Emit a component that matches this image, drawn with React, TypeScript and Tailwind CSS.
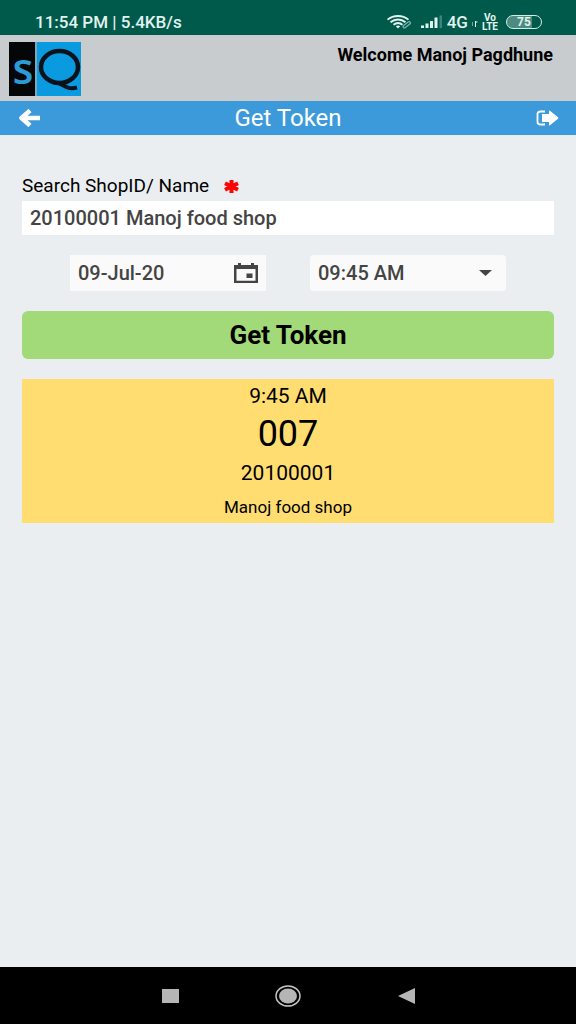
import type { ReactNode } from 'react';

function StatusBar() {
  return (
    <div className="flex items-center justify-between h-[35px] pt-2 pl-[35px] pr-[34px] text-[#e2f3ef] bg-[#005a4c]">
      <span className="text-[17px] font-medium leading-6">11:54 PM | 5.4KB/s</span>
      <div className="flex items-center">
        <svg className="w-[26px] h-[14px]" viewBox="0 0 25 14" fill="none" stroke="currentColor">
          <path d="M1 4.600C7 -0.200 16 -0.200 22 4.600" strokeWidth="1.800" />
          <path d="M4 7.200C8.500 3.600 14.500 3.600 19 7.200" strokeWidth="1.800" />
          <path d="M7 9.700C10 7.400 13 7.400 16 9.700" strokeWidth="1.800" />
          <path d="M9.300 11.200Q11.500 9.800 13.700 11.200L11.500 13.500Z" fill="currentColor" stroke="none" />
          <path d="M18 11.500L22.500 8" stroke="#7db5aa" strokeWidth="4" strokeLinecap="round" />
          <path d="M18 11.500L22.500 8" stroke="#005a4c" strokeWidth="1.500" strokeLinecap="round" />
        </svg>
        <svg className="w-[22px] h-[13px] ml-[9px]" viewBox="0 0 22 13" fill="currentColor">
          <path d="M0 10.500h3V13H0zM4.500 8.500h3V13h-3zM9 6h3v7H9zM13.500 2.500h3V13h-3z" />
          <path d="M18.500 0.500h2.500V13h-2.500z" fill="#3e8579" />
        </svg>
        <span className="ml-1 text-[17px] font-medium leading-6">4G</span>
        <svg className="w-[7px] h-[6px] mt-1 ml-[3px]" viewBox="0 0 7 6" stroke="currentColor">
          <path d="M1.500 1v4" opacity="0.5" />
          <path d="M4.500 0v6M4.500 1h2" />
        </svg>
        <span className="flex flex-col items-center ml-1 text-[10px] font-bold leading-[9px]">
          <span>Vo</span>
          <span>LTE</span>
        </span>
        <span className="flex items-center justify-center w-9 h-[14px] ml-2 text-[12px] font-bold leading-none border rounded-full border-[#d5ece7] bg-linear-to-r from-[#4d8a7f] from-75% to-[#005a4c] to-75%">
          75
        </span>
      </div>
    </div>
  );
}

function Logo() {
  return (
    <svg
      className="w-[72px] h-[54px] overflow-visible font-['Open_Sans',sans-serif]"
      viewBox="0 0 72 54"
      textAnchor="middle"
    >
      <path d="M0 0h26v54H0z" fill="#050608" />
      <path d="M26 0h2v54h-2z" fill="#7ba6bb" />
      <path d="M28 0h44v54H28z" fill="#0a9ae0" />
      <text className="font-semibold" x="14" y="42" fontSize="43" fill="#2b9bd8">
        s
      </text>
      <ellipse cx="50.500" cy="25" rx="18.500" ry="16" fill="none" stroke="#07131c" strokeWidth="4.500" />
      <path
        d="M45 41C53 39 56 49 68 45.500"
        fill="none"
        stroke="#07131c"
        strokeWidth="4"
      />
    </svg>
  );
}

function TitleBar() {
  return (
    <div className="flex items-center justify-between h-[34px] pl-[18px] pr-[17px] text-white bg-[#3c99da]">
      <button aria-label="Back" type="button">
        <svg
          className="w-[22px] h-[18px]"
          viewBox="0 0 22 18"
          fill="none"
          stroke="currentColor"
          strokeWidth="4.500"
          strokeLinejoin="round"
        >
          <path d="M12 1.500L3.500 9L12 16.500M4 9H22" />
        </svg>
      </button>
      <h1 className="text-2xl leading-8">Get Token</h1>
      <button aria-label="Log out" type="button">
        <svg className="w-[23px] h-[16px]" viewBox="0 0 23 16" fill="currentColor">
          <path d="M9 1.500H4.500Q1.500 1.500 1.500 4v8Q1.500 14.500 4.500 14.500H9" fill="none" stroke="currentColor" strokeWidth="1.800" />
          <path d="M6.500 4H13V1Q13 0 14 .7L22 7.300Q22.800 8 22 8.700L14 15.300Q13 16 13 15V12H6.500Q6 12 6 11.500V4.500Q6 4 6.500 4z" />
        </svg>
      </button>
    </div>
  );
}

function NavButton({ label, children }: { label: string; children: ReactNode }) {
  return (
    <button aria-label={label} className="flex items-center justify-center w-7 h-7" type="button">
      {children}
    </button>
  );
}

export default function App() {
  return (
    <div className="flex flex-col min-h-screen font-['Roboto',sans-serif] text-black bg-[#ebeef1]">
      <StatusBar />
      <header className="flex items-start justify-between h-[66px] pt-[7px] pl-[9px] pr-[23px] bg-[#c9cccf]">
        <Logo />
        <p className="text-lg font-bold leading-[26px]">Welcome Manoj Pagdhune</p>
      </header>
      <TitleBar />

      <main className="flex-1 px-[22px] pt-10">
        <label className="flex items-center h-[22px] mb-1 text-[19px]" htmlFor="shop">
          Search ShopID/ Name
          <svg
            className="w-[15px] h-[13px] ml-[15px]"
            viewBox="0 0 15 13"
            stroke="#fb0505"
            strokeWidth="4"
          >
            <path d="M7.500 0v13M1 3.200l13 6.600M14 3.200l-13 6.600" />
          </svg>
        </label>
        <input
          className="w-full h-[34px] px-2 pb-px text-xl font-medium bg-white text-[#444]"
          defaultValue="20100001 Manoj food shop"
          id="shop"
          type="text"
        />

        <div className="flex justify-between px-12 mt-5">
          <div className="flex items-center w-[196px] h-9 px-2 bg-[#fafafa]">
            <input
              aria-label="Date"
              className="flex-1 min-w-0 text-xl font-medium text-[#444]"
              defaultValue="09-Jul-20"
              type="text"
            />
            <button aria-label="Pick a date" type="button">
              <svg className="w-6 h-5" viewBox="0 0 24 20" fill="#444">
                <path d="M0 2h4V0h3v2h10V0h3v2h4v18H0zM2.500 6v11.800h19V6z" fillRule="evenodd" />
                <path d="M12.500 10.500h6V15h-6z" />
              </svg>
            </button>
          </div>
          <div className="grid items-center w-[196px] h-9 rounded-sm bg-[#fafafa]">
            <select
              aria-label="Time"
              className="w-full h-9 col-start-1 row-start-1 pl-2 text-xl font-medium appearance-none text-[#444]"
              defaultValue="09:45 AM"
            >
              <option>09:45 AM</option>
            </select>
            <svg
              className="w-[13px] h-[6px] col-start-1 row-start-1 mr-[14px] justify-self-end pointer-events-none"
              viewBox="0 0 13 6"
              fill="#444"
            >
              <path d="M0 0h13L6.500 6z" />
            </svg>
          </div>
        </div>

        <button
          className="w-full h-12 mt-5 text-[26px] font-bold rounded-md bg-[#a2d979]"
          type="button"
        >
          Get Token
        </button>

        <section className="flex flex-col items-center h-36 mt-5 bg-[#ffdd71]">
          <p className="text-[21px] leading-[34px]">9:45 AM</p>
          <p className="text-4xl leading-[42px]">007</p>
          <p className="text-[21px] leading-[36px]">20100001</p>
          <p className="text-[17px] leading-[32px]">Manoj food shop</p>
        </section>
      </main>

      <nav className="flex items-center justify-center h-[57px] gap-[90px] bg-black">
        <NavButton label="Recent apps">
          <svg className="w-[17px] h-[14px]" viewBox="0 0 17 14" fill="#b5b5b5">
            <path d="M0 0h17v14H0z" />
          </svg>
        </NavButton>
        <NavButton label="Home">
          <svg className="w-[26px] h-[22px]" viewBox="0 0 26 22" fill="#b5b5b5">
            <ellipse cx="13" cy="11" rx="12" ry="10" fill="none" stroke="#c4c4c4" strokeWidth="1.500" />
            <ellipse cx="13" cy="11" rx="9" ry="7.500" />
          </svg>
        </NavButton>
        <NavButton label="Back to previous app">
          <svg className="w-[17px] h-4" viewBox="0 0 17 16" fill="#b5b5b5">
            <path d="M17 0v16L0 8z" />
          </svg>
        </NavButton>
      </nav>
    </div>
  );
}
